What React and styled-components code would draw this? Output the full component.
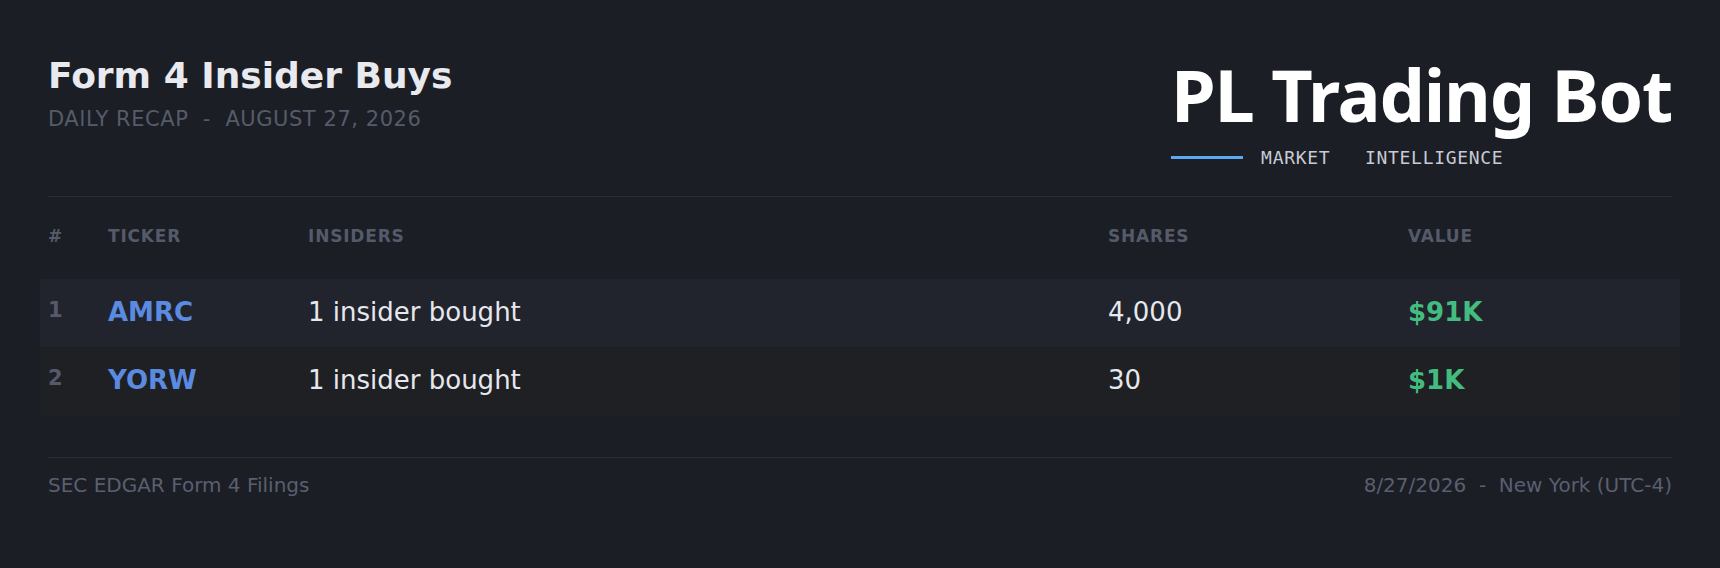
import React from 'react';
import styled, { createGlobalStyle } from 'styled-components';

const GlobalStyle = createGlobalStyle`
    html, body {
        margin: 0;
        padding: 0;
        background: #1b1e25;
    }
    body {
        font-family: "DejaVu Sans", "Liberation Sans", sans-serif;
        color: #e4e6eb;
    }
`;

const Page = styled.div`
    width: 1720px;
    height: 568px;
    box-sizing: border-box;
    padding: 55px 48px 0;
    background: #1b1e25;
`;

const Header = styled.header`
    display: flex;
    justify-content: space-between;
    align-items: flex-start;
    padding-bottom: 28px;
    border-bottom: 1px solid #2a2d37;
`;

const TitleBlock = styled.div`
    display: flex;
    flex-direction: column;
`;

const Title = styled.h1`
    margin: 0;
    font-size: 36px;
    font-weight: bold;
    color: #e9eaef;
`;

const Subtitle = styled.div`
    margin-top: 11px;
    font-size: 21px;
    letter-spacing: 0.55px;
    text-transform: uppercase;
    white-space: pre;
    color: #565b6b;
`;

const Brand = styled.div`
    margin-top: 3px;
    display: flex;
    flex-direction: column;
`;

const BrandName = styled.div`
    font-family: "Noto Sans", sans-serif;
    font-size: 72px;
    font-weight: bold;
    letter-spacing: -1.2px;
    line-height: 1;
    color: #ffffff;
`;

const Tagline = styled.div`
    margin-top: 17px;
    display: flex;
    align-items: center;
    gap: 18px;
`;

const Accent = styled.span`
    width: 72px;
    height: 3px;
    background: #5ea8f2;
`;

const TaglineText = styled.span`
    font-family: "DejaVu Sans Mono", monospace;
    font-size: 18px;
    letter-spacing: 0.7px;
    white-space: pre;
    color: #c8cbd5;
`;

const columns = '60px 200px 800px 300px 1fr';

const HeadRow = styled.div`
    display: grid;
    grid-template-columns: ${columns};
    padding: 29px 0 33px;
`;

const HeadCell = styled.div`
    font-size: 17px;
    font-weight: bold;
    letter-spacing: 0.8px;
    color: #555a6a;
`;

const Row = styled.div`
    display: grid;
    grid-template-columns: ${columns};
    align-items: center;
    margin: 0 -8px;
    padding: 18px 8px 20px;
    background: ${(p) => (p.$alt ? '#1e2024' : '#21242c')};
`;

const Rank = styled.div`
    align-self: start;
    padding-top: 1px;
    font-size: 21px;
    font-weight: bold;
    color: #555a6a;
`;

const Ticker = styled.div`
    font-size: 26px;
    font-weight: bold;
    color: #5b8be0;
`;

const Cell = styled.div`
    font-size: 26px;
    color: #e6e8ed;
`;

const Value = styled.div`
    font-size: 26px;
    font-weight: bold;
    color: #43bd7f;
`;

const Footer = styled.footer`
    margin-top: 42px;
    padding-top: 15px;
    border-top: 1px solid #2a2d37;
    display: flex;
    justify-content: space-between;
    font-size: 20px;
    white-space: pre;
    color: #5a5f70;
`;

const buys = [
    { ticker: 'AMRC', insiders: '1 insider bought', shares: '4,000', value: '$91K' },
    { ticker: 'YORW', insiders: '1 insider bought', shares: '30', value: '$1K' },
];

export default function App() {
    return (
        <Page>
            <GlobalStyle />
            <Header>
                <TitleBlock>
                    <Title>Form 4 Insider Buys</Title>
                    <Subtitle>{'Daily Recap  -  August 27, 2026'}</Subtitle>
                </TitleBlock>
                <Brand>
                    <BrandName>PL Trading Bot</BrandName>
                    <Tagline>
                        <Accent />
                        <TaglineText>{'MARKET   INTELLIGENCE'}</TaglineText>
                    </Tagline>
                </Brand>
            </Header>

            <HeadRow>
                <HeadCell>#</HeadCell>
                <HeadCell>TICKER</HeadCell>
                <HeadCell>INSIDERS</HeadCell>
                <HeadCell>SHARES</HeadCell>
                <HeadCell>VALUE</HeadCell>
            </HeadRow>
            {buys.map((b, i) => (
                <Row key={b.ticker} $alt={i % 2 === 1}>
                    <Rank>{i + 1}</Rank>
                    <Ticker>{b.ticker}</Ticker>
                    <Cell>{b.insiders}</Cell>
                    <Cell>{b.shares}</Cell>
                    <Value>{b.value}</Value>
                </Row>
            ))}

            <Footer>
                <span>SEC EDGAR Form 4 Filings</span>
                <span>{'8/27/2026  -  New York (UTC-4)'}</span>
            </Footer>
        </Page>
    );
}
